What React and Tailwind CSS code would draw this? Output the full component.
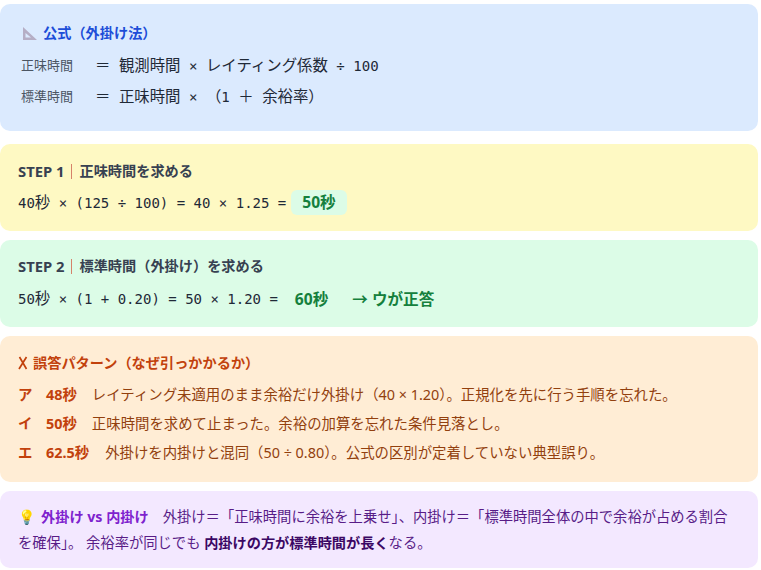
const mono = "font-['DejaVu_Sans_Mono','Noto_Sans_CJK_JP',monospace] text-[14.08px] text-[#1f2937] whitespace-pre";
const calc = "mt-[2px] font-['DejaVu_Sans_Mono','Noto_Sans_CJK_JP',monospace] text-[14px] text-[#1f2937] whitespace-pre";

function Panel({ className, children }) {
  return <div className={`rounded-[10px] ${className}`}>{children}</div>;
}

// 等幅の中の和文だけ少し大きい
function Ja({ children }) {
  return <span className="text-[15.4px]">{children}</span>;
}

function Step({ no, title }) {
  return (
    <div className="flex items-center text-[14.2px] leading-[20px] font-bold text-[#374151]">
      <span className="text-[14.8px]">STEP {no}</span>
      <span className="ml-[7px] mr-[7px] h-[15px] w-px bg-[#d6826a]" />
      <span>{title}</span>
    </div>
  );
}

const mistakes = [
  { key: 'ア', val: '48秒', gap: 'ml-[15px]', text: 'レイティング未適用のまま余裕だけ外掛け（40 × 1.20）。正規化を先に行う手順を忘れた。' },
  { key: 'イ', val: '50秒', gap: 'ml-[15px]', text: '正味時間を求めて止まった。余裕の加算を忘れた条件見落とし。' },
  { key: 'エ', val: '62.5秒', gap: 'ml-[16px]', text: '外掛けを内掛けと混同（50 ÷ 0.80）。公式の区別が定着していない典型誤り。' },
];

export default function App() {
  return (
    <div className="w-[761px] h-[570px] overflow-hidden bg-white pt-[4px] pr-[3px] font-['Noto_Sans','Noto_Sans_CJK_JP',sans-serif]">
      {/* 公式 */}
      <Panel className="h-[127px] bg-[#dbeafe] pl-[21px] pt-[19px]">
        <div className="flex items-center text-[14.2px] leading-[20px] font-bold text-[#1d4ed8]">
          <svg width="16" height="15" viewBox="0 0 16 15" className="ml-[1px] mr-[5px]">
            <path d="M1 1 L1 14 L15 14 Z M3.5 7 L3.5 11.5 L9 11.5 Z" fill="#b5aec5" fillRule="evenodd" />
          </svg>
          公式（外掛け法）
        </div>
        <div className="mt-[11px] flex items-center h-[24px]">
          <span className="w-[74px] text-[13px] text-[#4b5563]">正味時間</span>
          <span className={`mt-[2px] ${mono}`}><Ja>＝</Ja> <Ja>観測時間</Ja> × <Ja>レイティング係数</Ja> ÷ 100</span>
        </div>
        <div className="mt-[7px] flex items-center h-[24px]">
          <span className="w-[74px] text-[13px] text-[#4b5563]">標準時間</span>
          <span className={`mt-[2px] ${mono}`}><Ja>＝</Ja> <Ja>正味時間</Ja> × <Ja>（</Ja>1 <Ja>＋</Ja> <Ja>余裕率）</Ja></span>
        </div>
      </Panel>

      {/* STEP 1 */}
      <Panel className="mt-[13px] h-[87px] bg-[#fef9c3] pl-[18px] pt-[17px]">
        <Step no="1" title="正味時間を求める" />
        <div className="mt-[9px] flex items-center">
          <span className={calc}>40<Ja>秒</Ja> × (125 ÷ 100) = 40 × 1.25 =</span>
          <span className="ml-[5px] rounded-[6px] bg-[#dcfce7] px-[11px] h-[25px] leading-[25px] text-[15.6px] font-bold text-[#15803d]">50秒</span>
        </div>
      </Panel>

      {/* STEP 2 */}
      <Panel className="mt-[9px] h-[87px] bg-[#dcfce7] pl-[18px] pt-[16px]">
        <Step no="2" title="標準時間（外掛け）を求める" />
        <div className="mt-[10px] flex items-center">
          <span className={calc}>50<Ja>秒</Ja> × (1 + 0.20) = 50 × 1.20 =</span>
          <span className="ml-[17px] h-[26px] leading-[26px] text-[15.6px] font-bold text-[#15803d]">60秒</span>
          <span className="ml-[24px] h-[26px] leading-[26px] text-[15.6px] font-bold text-[#15803d]">→ ウが正答</span>
        </div>
      </Panel>

      {/* 誤答 */}
      <Panel className="mt-[9px] h-[146px] bg-[#ffedd5] pl-[18px] pt-[17px]">
        <div className="flex items-center text-[14.2px] leading-[20px] font-bold text-[#c2410c]">
          <svg width="10" height="14" viewBox="0 0 10 14" className="mr-[5px]">
            <path d="M1.5 1 L8.5 13 M8.5 1 L1 13" stroke="#c2410c" strokeWidth="1.7" fill="none" />
          </svg>
          誤答パターン（なぜ引っかかるか）
        </div>
        <div className="mt-[10px] flex flex-col gap-[5px]">
          {mistakes.map((m) => (
            <div key={m.key} className="flex h-[24px] items-center text-[14.4px] text-[#92400e]">
              <span className="w-[28px] font-bold text-[#c2410c]">{m.key}</span>
              <span className="font-bold text-[#c2410c]">{m.val}</span>
              <span className={m.gap}>{m.text}</span>
            </div>
          ))}
        </div>
      </Panel>

      {/* 補足 */}
      <Panel className="mt-[9px] h-[77px] bg-[#f3e8ff] pl-[18px] pr-[20px] pt-[13px] text-[14.3px] leading-[26px] text-[#581c87]">
        <span className="mr-[6px] text-[14px]">💡</span>
        <span className="font-bold text-[14.2px] text-[#7e22ce]">外掛け vs 内掛け</span>
        <span className="ml-[14px]">外掛け＝「正味時間に余裕を上乗せ」、内掛け＝「標準時間全体の中で余裕が占める割合を確保」。 余裕率が同じでも </span>
        <span className="font-bold text-[14.2px] text-[#3b0764]">内掛けの方が標準時間が長く</span>
        <span>なる。</span>
      </Panel>
    </div>
  );
}
